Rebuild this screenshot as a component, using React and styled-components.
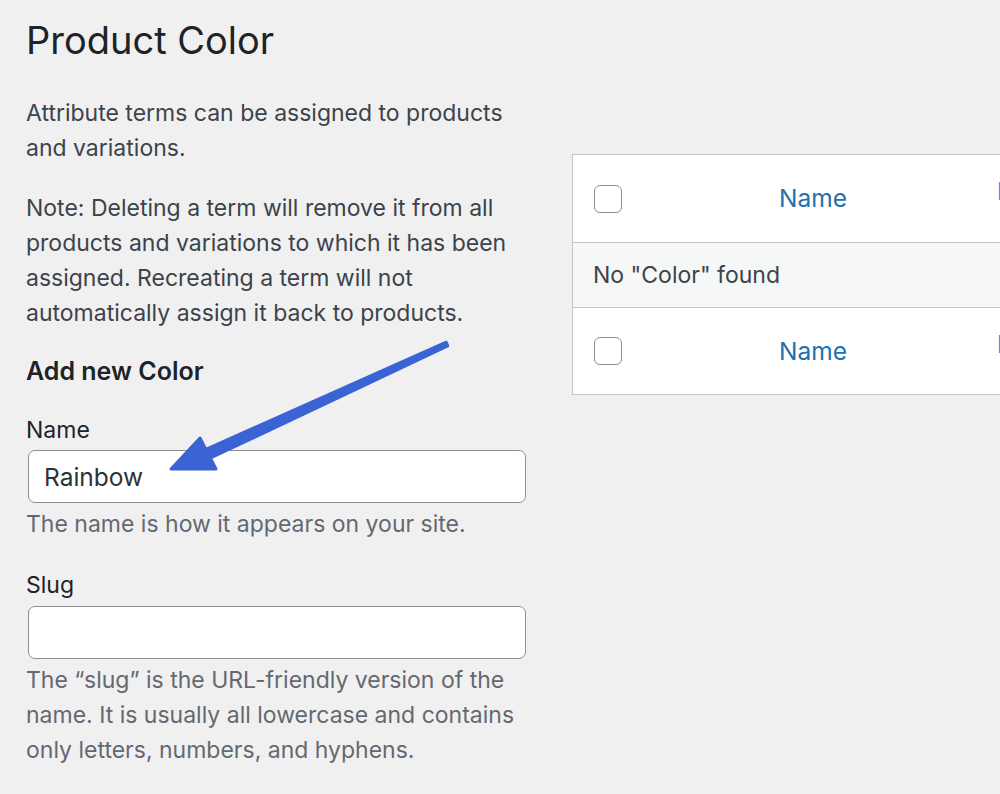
import React from "react";
import styled, { createGlobalStyle } from "styled-components";

const Global = createGlobalStyle`
  html, body { margin: 0; padding: 0; background: #f0f0f1; }
  body { font-family: Inter, "Noto Sans", sans-serif; color: #3c434a; }
`;

const Page = styled.div`
  position: relative;
  width: 1000px;
  height: 794px;
  overflow: hidden;
  display: flex;
  gap: 46px;
  padding-left: 26px;
  box-sizing: border-box;
`;

const LeftCol = styled.div`
  width: 500px;
  flex: none;
  display: flex;
  flex-direction: column;
`;

const Title = styled.h1`
  margin: 14px 0 0;
  font-size: 38px;
  line-height: 52px;
  font-weight: 400;
  color: #1d2327;
`;

const Para = styled.p`
  margin: ${(p) => p.$top || 0}px 0 0;
  font-size: 23px;
  line-height: 35px;
  color: #3c434a;
`;

const SectionTitle = styled.h2`
  margin: 23px 0 0;
  font-size: 25px;
  line-height: 35px;
  font-weight: 600;
  color: #1d2327;
`;

const Label = styled.label`
  display: block;
  margin-top: ${(p) => p.$top || 0}px;
  font-size: 23px;
  line-height: 35px;
  color: #1d2327;
`;

const Input = styled.input`
  display: block;
  box-sizing: border-box;
  width: 498px;
  height: 53px;
  margin: ${(p) => p.$top || 2}px 0 0 2px;
  padding: 0 15px;
  border: 1.5px solid #8c8f94;
  border-radius: 7px;
  background: #fff;
  font-family: Inter, "Noto Sans", sans-serif;
  font-size: 24.5px;
  color: #2c3338;
  outline: none;
`;

const Help = styled.p`
  margin: 4px 0 0;
  font-size: 23px;
  line-height: 35px;
  color: #646970;
`;

const RightCol = styled.div`
  flex: none;
  padding-top: 154px;
`;

const Table = styled.div`
  width: 640px;
  background: #fff;
  border: 1px solid #c3c4c7;
  box-sizing: border-box;
`;

const Row = styled.div`
  display: grid;
  grid-template-columns: 68px 344px 1fr;
  align-items: center;
  box-sizing: border-box;
  height: ${(p) => p.$h}px;
  background: ${(p) => (p.$alt ? "#f6f7f7" : "#fff")};
  border-top: ${(p) => (p.$divider ? "1px solid #c3c4c7" : "none")};
`;

const CheckCell = styled.div`
  padding-left: 21px;
  display: flex;
  align-items: center;
`;

const Checkbox = styled.span`
  display: block;
  width: 28px;
  height: 28px;
  box-sizing: border-box;
  border: 1.5px solid #8c8f94;
  border-radius: 6px;
  background: #fff;
`;

const HeadLink = styled.a`
  display: block;
  text-align: center;
  font-size: 24.5px;
  line-height: 35px;
  color: #2271b1;
  text-decoration: none;
`;

const DescHead = styled.a`
  align-self: start;
  padding: 24px 0 0 12px;
  font-size: 24.5px;
  line-height: 1;
  color: #2271b1;
  text-decoration: none;
  white-space: nowrap;
`;

const EmptyText = styled.div`
  grid-column: 1 / -1;
  padding-left: 20px;
  font-size: 23px;
  color: #3c434a;
`;

const ArrowSvg = styled.svg`
  position: absolute;
  left: 0;
  top: 0;
  pointer-events: none;
`;

function Arrow() {
  return (
    <ArrowSvg width="1000" height="794" viewBox="0 0 1000 794">
      <g fill="#3b63d4" stroke="#3b63d4" strokeLinejoin="round" strokeWidth="3">
        <polygon points="447.8,345.8 446.2,342.2 206.4,449 210.6,458" />
        <polygon points="200,438 171,469 216,469" />
      </g>
    </ArrowSvg>
  );
}

function HeaderRow({ divider }) {
  return (
    <Row $h={87} $divider={divider}>
      <CheckCell>
        <Checkbox />
      </CheckCell>
      <HeadLink href="#">Name</HeadLink>
      <DescHead href="#">Description</DescHead>
    </Row>
  );
}

export default function App() {
  return (
    <>
      <Global />
      <Page>
        <LeftCol>
          <Title>Product Color</Title>
          <Para $top={30}>Attribute terms can be assigned to products and variations.</Para>
          <Para $top={25}>
            Note: Deleting a term will remove it from all products and variations to which it has
            been assigned. Recreating a term will not automatically assign it back to products.
          </Para>
          <SectionTitle>Add new Color</SectionTitle>
          <Label $top={24}>Name</Label>
          <Input defaultValue="Rainbow" $top={2} />
          <Help>The name is how it appears on your site.</Help>
          <Label $top={26}>Slug</Label>
          <Input defaultValue="" $top={3} />
          <Help>
            The “slug” is the URL-friendly version of the name. It is usually all lowercase and
            contains only letters, numbers, and hyphens.
          </Help>
        </LeftCol>
        <RightCol>
          <Table>
            <HeaderRow />
            <Row $h={65} $alt $divider>
              <EmptyText>No "Color" found</EmptyText>
            </Row>
            <HeaderRow divider />
          </Table>
        </RightCol>
        <Arrow />
      </Page>
    </>
  );
}
